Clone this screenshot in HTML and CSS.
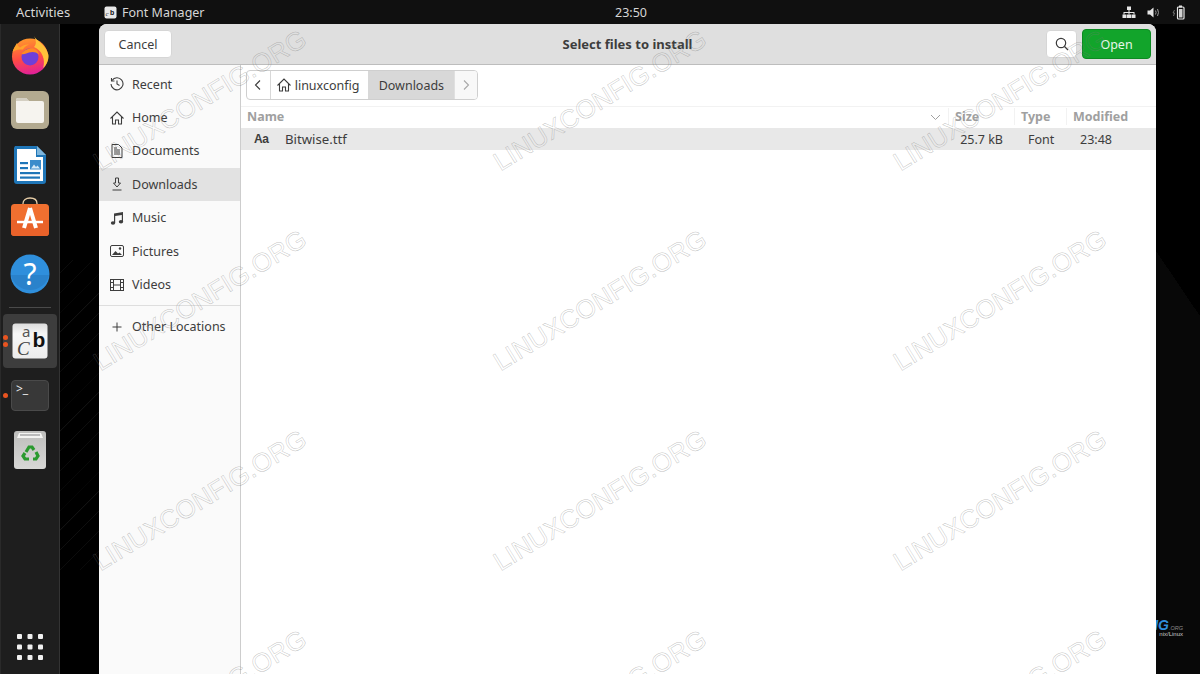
FILE: index.html
```html
<!DOCTYPE html>
<html lang="en">
<head>
  <meta charset="UTF-8">
  <title>Select files to install</title>
  <link rel="stylesheet" href="styles.css">
</head>
<body>

  <header class="topbar">
    <span class="activities">Activities</span>
    <span class="app-menu">
      <svg class="app-icon" width="13" height="13" viewBox="0 0 13 13">
        <rect x="0.5" y="0.5" width="12" height="12" rx="2" fill="#e8e8e8"/>
        <text x="1.5" y="10" font-size="7" font-style="italic" fill="#333" font-family="Liberation Serif, serif">c</text>
        <text x="6" y="9" font-size="7" font-weight="700" fill="#111" font-family="Liberation Sans, sans-serif">b</text>
      </svg>
      Font Manager
    </span>
    <span class="clock">23:50</span>
    <span class="tray">
      <svg width="14" height="13" viewBox="0 0 14 13" fill="#e6e6e6">
        <rect x="5" y="0.5" width="4" height="3.5"/>
        <rect x="0.5" y="8.5" width="4" height="3.5"/>
        <rect x="5" y="8.5" width="4" height="3.5"/>
        <rect x="9.5" y="8.5" width="4" height="3.5"/>
        <path d="M6.5 4h1v2h5v2.500h-1V7H7.500v1.500h-1V7H2.500v1.500h-1V6h5z"/>
      </svg>
      <svg width="14" height="13" viewBox="0 0 14 13">
        <path d="M0.500 4.500h2.500L6.500 1.500v10l-3.500-3H0.500z" fill="#e6e6e6"/>
        <path d="M8.500 4.500q1.200 2 0 4M10.500 3q2 3.500 0 7" fill="none" stroke="#9a9a9a" stroke-width="1"/>
      </svg>
      <svg width="14" height="15" viewBox="0 0 14 15">
        <path d="M2.500 5L1 8h1.500L1.500 11" fill="none" stroke="#888" stroke-width="0.800"/>
        <rect x="7" y="0.500" width="3" height="2" fill="#e6e6e6"/>
        <rect x="5.500" y="2" width="6.500" height="12" rx="1" fill="none" stroke="#e6e6e6" stroke-width="1.200"/>
        <rect x="7" y="4" width="3.500" height="8.500" fill="#d0d0d0"/>
      </svg>
    </span>
  </header>

  <div class="workspace">
    <nav class="dock">
      <svg class="dock-icon firefox" width="40" height="40" viewBox="0 0 40 40">
        <defs>
          <linearGradient id="ff" x1="0.300" y1="0" x2="0.500" y2="1">
            <stop offset="0" stop-color="#ff9a2b"/>
            <stop offset="0.550" stop-color="#ff4a45"/>
            <stop offset="1" stop-color="#e0209a"/>
          </linearGradient>
        </defs>
        <circle cx="20" cy="21.500" r="18" fill="url(#ff)"/>
        <path d="M24 1c2 5 12 8 14.500 19 .5 4-1.500 10-5.500 13 3-8-1-18-9-21 3-3 2-7 0-11z" fill="#ffc23a"/>
        <path d="M2.500 17C3.500 14 5 11 7 8c.5 2 1.500 3.500 3 4.500 3-2.500 6-3.500 9-3-3 1-5 3-6 5-4 0-7 0-10.500 2.500z" fill="#ffa42b"/>
        <circle cx="20" cy="22" r="8.500" fill="#6f3fd8"/>
        <path d="M11.500 19c2-4 8-6.500 12-5.500 3 1 5 3 5.500 6-3-3-7-3-10-2-2 .500-5 2.500-7.500 1.500z" fill="#ff8a24"/>
      </svg>

      <svg class="dock-icon files" width="40" height="40" viewBox="0 0 40 40">
        <rect x="1" y="1" width="38" height="38" rx="6" fill="#b3aa90"/>
        <path d="M6 10a2 2 0 0 1 2-2h8l3 3h13a2 2 0 0 1 2 2v18a2 2 0 0 1-2 2H8a2 2 0 0 1-2-2z" fill="#f6f4ef"/>
        <path d="M6 10a2 2 0 0 1 2-2h8l3 3H6z" fill="#d4cfc2"/>
      </svg>

      <svg class="dock-icon writer" width="40" height="40" viewBox="0 0 40 40">
        <path d="M5 1h22l9 9v26a3 3 0 0 1-3 3H7a3 3 0 0 1-3-3V3z" fill="#1f76b8"/>
        <path d="M7 4h19v8h7v24H7z" fill="#fff"/>
        <path d="M27 1l9 9h-9z" fill="#7fb6dc"/>
        <rect x="10" y="17" width="8" height="2.200" fill="#1f76b8"/>
        <rect x="10" y="22" width="8" height="2.200" fill="#1f76b8"/>
        <rect x="10" y="27" width="20" height="2.200" fill="#1f76b8"/>
        <rect x="10" y="31.500" width="20" height="2.200" fill="#1f76b8"/>
        <rect x="20" y="15" width="11" height="9.500" fill="#3b8ccb"/>
        <path d="M21 23.500l3-4 2 2.500 1.500-1.500 2.500 3z" fill="#d5e9f7"/>
      </svg>

      <svg class="dock-icon store" width="40" height="40" viewBox="0 0 40 40">
        <path d="M13 9V6.500C13 3 16 1 20 1s7 2 7 5.500V9" fill="none" stroke="#e9cfa8" stroke-width="1.300"/>
        <rect x="1" y="7" width="38" height="32" rx="3.500" fill="#f07030"/>
        <path d="M1 23h38v12.500a3.500 3.500 0 0 1-3.500 3.500h-32A3.500 3.500 0 0 1 1 35.500z" fill="#e9622a"/>
        <path d="M20 11l-6 20M20 11l6 20" stroke="#fff" stroke-width="4" fill="none"/>
        <path d="M7 25h26" stroke="#fff" stroke-width="2.500"/>
      </svg>

      <svg class="dock-icon help" width="40" height="40" viewBox="0 0 40 40">
        <circle cx="20" cy="20" r="19.500" fill="#2f8fdc"/>
        <path d="M1 21h38a19.500 19.500 0 0 1-38 0z" fill="#2a82cb"/>
        <text x="20" y="31" text-anchor="middle" font-size="30" fill="#fff" font-family="Noto Sans, sans-serif">?</text>
      </svg>

      <div class="dock-sep"></div>

      <div class="dock-active">
        <span class="dot dot-a"></span>
        <span class="dot dot-b"></span>
        <svg width="36" height="36" viewBox="0 0 36 36">
          <defs>
            <linearGradient id="card" x1="0" y1="0" x2="0" y2="1">
              <stop offset="0" stop-color="#dcdcdc"/>
              <stop offset="0.300" stop-color="#f6f6f6"/>
              <stop offset="1" stop-color="#ececec"/>
            </linearGradient>
          </defs>
          <rect x="0.500" y="0.500" width="35" height="35" rx="3" fill="url(#card)"/>
          <text x="10" y="14" font-size="15" fill="#555" font-family="Noto Sans, sans-serif">a</text>
          <text x="20.500" y="24" font-size="21" font-weight="700" fill="#111" font-family="Liberation Sans, sans-serif">b</text>
          <text x="5" y="32" font-size="19" font-style="italic" fill="#444" font-family="Liberation Serif, serif">C</text>
        </svg>
      </div>

      <div class="dock-terminal">
        <span class="dot dot-c"></span>
        <div class="terminal-icon">&gt;_</div>
      </div>

      <svg class="dock-icon trash" width="34" height="40" viewBox="0 0 34 40">
        <defs>
          <linearGradient id="bin" x1="0" y1="0" x2="0" y2="1">
            <stop offset="0" stop-color="#bdbdbb"/>
            <stop offset="1" stop-color="#d8d8d6"/>
          </linearGradient>
        </defs>
        <rect x="1" y="1" width="32" height="38" rx="3" fill="url(#bin)"/>
        <path d="M4 8l2-5h22l2 5z" fill="#f4f4f2"/>
        <rect x="7" y="4" width="20" height="2" fill="#bbb"/>
        <g fill="none" stroke="#2b9a2f" stroke-width="3.200">
          <path d="M13 22l3-5h3l2 3"/>
          <path d="M23 22l2 4-2 3h-3"/>
          <path d="M16 29h-4l-2-3 2-3"/>
        </g>
      </svg>

      <svg class="dock-grid" width="28" height="28" viewBox="0 0 28 28" fill="#f2f2f2">
        <rect x="1" y="1" width="5" height="5" rx="1"/><rect x="11.500" y="1" width="5" height="5" rx="1"/><rect x="22" y="1" width="5" height="5" rx="1"/>
        <rect x="1" y="11.500" width="5" height="5" rx="1"/><rect x="11.500" y="11.500" width="5" height="5" rx="1"/><rect x="22" y="11.500" width="5" height="5" rx="1"/>
        <rect x="1" y="22" width="5" height="5" rx="1"/><rect x="11.500" y="22" width="5" height="5" rx="1"/><rect x="22" y="22" width="5" height="5" rx="1"/>
      </svg>
    </nav>

    <div class="desktop">
      <div class="corner-logo"><b>IG</b><i>.ORG</i><small>nix/Linux</small></div>

      <section class="dialog">
        <div class="dialog-head">
          <button class="btn btn-cancel">Cancel</button>
          <span class="dialog-title">Select files to install</span>
          <button class="btn btn-icon">
            <svg width="14" height="14" viewBox="0 0 14 14" fill="none" stroke="#3d3d3d" stroke-width="1.200">
              <circle cx="6" cy="6" r="4.700"/>
              <path d="M9.500 9.500l3.500 3.500"/>
            </svg>
          </button>
          <button class="btn btn-open">Open</button>
        </div>

        <div class="dialog-body">
          <aside class="sidebar">
            <div class="place">
              <svg width="14" height="14" viewBox="0 0 14 14" fill="none" stroke="#3d3d3d" stroke-width="1.100">
                <path d="M2 3.500A6 6 0 1 1 1 7"/><path d="M1.500 1v3h3"/><path d="M7 3.500V7l2.500 1.500"/>
              </svg>
              Recent
            </div>
            <div class="place">
              <svg width="14" height="14" viewBox="0 0 14 14" fill="none" stroke="#3d3d3d" stroke-width="1.100">
                <path d="M0.500 7.500L7 1l6.500 6.500"/><path d="M2.500 6v7h3V9h3v4h3V6"/>
              </svg>
              Home
            </div>
            <div class="place">
              <svg width="14" height="14" viewBox="0 0 14 14" fill="none" stroke="#3d3d3d" stroke-width="1">
                <path d="M2 .500h6.500L12 4v9.500H2z"/><path d="M4 6h6M4 8h6M4 10h6M4 4h3"/>
              </svg>
              Documents
            </div>
            <div class="place place-on">
              <svg width="14" height="14" viewBox="0 0 14 14" fill="none" stroke="#3d3d3d" stroke-width="1">
                <path d="M5.500 1h3v5h2L7 10 3.500 6h2z"/><path d="M2.500 13h9"/>
              </svg>
              Downloads
            </div>
            <div class="place">
              <svg width="14" height="14" viewBox="0 0 14 14" fill="#3d3d3d">
                <path d="M4 2.500L13 1v9.500h-1.200V4L5.200 5.100V12H4z"/>
                <ellipse cx="3" cy="12" rx="2.200" ry="1.700"/><ellipse cx="11" cy="10.700" rx="2.200" ry="1.700"/>
              </svg>
              Music
            </div>
            <div class="place">
              <svg width="14" height="14" viewBox="0 0 14 14">
                <rect x="0.500" y="1.500" width="13" height="11" rx="1.500" fill="none" stroke="#3d3d3d"/>
                <path d="M2 11l3.500-4 2.500 2.500 1.500-1 2.500 2.500z" fill="#3d3d3d"/>
                <circle cx="10" cy="4.500" r="1.200" fill="#3d3d3d"/>
              </svg>
              Pictures
            </div>
            <div class="place">
              <svg width="14" height="14" viewBox="0 0 14 14" fill="none" stroke="#3d3d3d">
                <rect x="0.500" y="1.500" width="13" height="11"/>
                <path d="M3.500 1.500v11M10.500 1.500v11M3.500 7h7M.5 4.500h3M.5 9.500h3M10.500 4.500h3M10.500 9.500h3"/>
              </svg>
              Videos
            </div>
            <div class="place-sep"></div>
            <div class="place place-other">
              <svg width="14" height="14" viewBox="0 0 14 14" fill="none" stroke="#3d3d3d" stroke-width="1">
                <path d="M7 2.500v9M2.500 7h9"/>
              </svg>
              Other Locations
            </div>
          </aside>

          <main class="browser">
            <div class="pathbar">
              <span class="crumb crumb-nav">
                <svg width="8" height="12" viewBox="0 0 8 12" fill="none" stroke="#3d3d3d" stroke-width="1.100"><path d="M6 1.500L1.500 6 6 10.500"/></svg>
              </span>
              <span class="crumb crumb-home">
                <svg width="14" height="14" viewBox="0 0 14 14" fill="none" stroke="#3d3d3d" stroke-width="1.100">
                  <path d="M0.500 7.500L7 1l6.500 6.500"/><path d="M2.500 6v7h3V9h3v4h3V6"/>
                </svg>
                linuxconfig
              </span>
              <span class="crumb crumb-on">Downloads</span>
              <span class="crumb crumb-nav crumb-off">
                <svg width="8" height="12" viewBox="0 0 8 12" fill="none" stroke="#a8a8a8" stroke-width="1.100"><path d="M2 1.500L6.500 6 2 10.500"/></svg>
              </span>
            </div>

            <div class="file-row file-head">
              <span class="col-name">Name</span>
              <svg class="sort-caret" width="11" height="7" viewBox="0 0 11 7" fill="none" stroke="#a0a0a0"><path d="M1 1l4.500 4.500L10 1"/></svg>
              <span class="col-size">Size</span>
              <span class="col-type">Type</span>
              <span class="col-date">Modified</span>
            </div>
            <div class="file-row file-on">
              <span class="col-name">
                <span class="font-glyph">Aa</span>
                <span class="file-name">Bitwise.ttf</span>
              </span>
              <span class="col-size">25.7 kB</span>
              <span class="col-type">Font</span>
              <span class="col-date">23:48</span>
            </div>
          </main>
        </div>
      </section>
    </div>
  </div>

  <!-- watermark over the whole shot -->
  <div class="watermark">
    <span>LINUXCONFIG.ORG</span><span>LINUXCONFIG.ORG</span><span>LINUXCONFIG.ORG</span>
    <span>LINUXCONFIG.ORG</span><span>LINUXCONFIG.ORG</span><span>LINUXCONFIG.ORG</span>
    <span>LINUXCONFIG.ORG</span><span>LINUXCONFIG.ORG</span><span>LINUXCONFIG.ORG</span>
    <span>LINUXCONFIG.ORG</span><span>LINUXCONFIG.ORG</span><span>LINUXCONFIG.ORG</span>
  </div>

</body>
</html>
```

FILE: styles.css
```css
html, body {
  height: 100%;
}
body {
  margin: 0;
  position: relative;
  display: flex;
  flex-direction: column;
  overflow: hidden;
  background-color: #000;
  font-family: "Noto Sans", sans-serif;
  font-size: 12.500px;
  color: #3d3d3d;
}

/* top bar */
.topbar {
  height: 24px;
  flex: none;
  display: flex;
  align-items: center;
  position: relative;
  background-color: #101010;
  color: #d6d6d6;
  padding-left: 16px;
}
.activities {
  width: 88px;
  font-size: 13px;
}
.app-menu {
  display: flex;
  align-items: center;
  gap: 5px;
}
.clock {
  position: absolute;
  left: 615px;
}
.tray {
  margin-left: auto;
  display: flex;
  align-items: center;
  gap: 11px;
  padding-right: 14px;
}

/* left dock */
.workspace {
  flex: 1;
  display: flex;
  min-height: 0;
}
.dock {
  flex: none;
  display: flex;
  flex-direction: column;
  align-items: center;
  background-color: #1e1e1e;
  border-right: 1px solid #333;
  border-left: 1px solid #2a2a2a;
  box-sizing: border-box;
  width: 60px;
  padding-top: 11px;
}
.dock-icon {
  flex: none;
  margin-bottom: 15px;
}
.dock .writer {
  margin-bottom: 12px;
}
.dock .store {
  margin-bottom: 17px;
}
.dock .help {
  margin-bottom: 13px;
}
.dock-sep {
  width: 42px;
  height: 1px;
  flex: none;
  background-color: #4a4a4a;
}
.dock-active {
  position: relative;
  width: 54px;
  height: 54px;
  flex: none;
  margin-top: 6px;
  display: flex;
  align-items: center;
  justify-content: center;
  background-color: #3d3d3d;
  border-radius: 4px;
}
.dot {
  position: absolute;
  left: 0;
  width: 5px;
  height: 5px;
  border-radius: 50%;
  background-color: #e95420;
}
.dot-a { top: 21px; }
.dot-b { top: 28px; }
.dot-c { top: 13px; left: 2px; }
.dock-terminal {
  position: relative;
  width: 58px;
  height: 32px;
  flex: none;
  margin-top: 12px;
  margin-bottom: 18px;
  display: flex;
  justify-content: center;
}
.terminal-icon {
  width: 38px;
  height: 31px;
  box-sizing: border-box;
  padding: 1px 4px;
  border: 1px solid #4a4a4a;
  border-radius: 4px;
  background-color: #383838;
  color: #eee;
  font-size: 12px;
  line-height: 14px;
}
.dock-grid {
  margin-top: auto;
  margin-bottom: 13px;
}

/* desktop + dialog */
.desktop {
  flex: 1;
  position: relative;
  padding-left: 39px;
  background-image:
    repeating-linear-gradient(-45deg, #000 0, #000 13px, #141414 14px),
    linear-gradient(236deg, #000 37px, #080808 37px);
  background-size: 39px 310px, 44px 424px;
  background-position: 0 236px, 100% 100%;
  background-repeat: no-repeat;
}
.dialog {
  position: relative;
  width: 1057px;
  height: 100%;
  display: flex;
  flex-direction: column;
  background-color: #fff;
  border-radius: 8px 8px 0 0;
  overflow: hidden;
}
.dialog-head {
  height: 41px;
  flex: none;
  display: flex;
  align-items: center;
  gap: 5px;
  position: relative;
  padding: 0 5px;
  box-sizing: border-box;
  background-color: #dfdfdf;
  border-bottom: 1px solid #bdbdbd;
}
.dialog-title {
  position: absolute;
  left: 0;
  right: 0;
  text-align: center;
  font-weight: 700;
  font-size: 13px;
  pointer-events: none;
}
.btn {
  height: 28px;
  box-sizing: border-box;
  padding: 0;
  font: inherit;
  color: #3d3d3d;
  background-color: #fff;
  border: 1px solid #d6d6d6;
  border-radius: 4px;
}
.btn-cancel {
  width: 68px;
}
.btn-icon {
  width: 31px;
  margin-left: auto;
  display: flex;
  align-items: center;
  justify-content: center;
}
.btn-open {
  width: 69px;
  height: 30px;
  color: #e6f6e8;
  background-color: #12a42b;
  border-color: #0d8a22;
}
.dialog-body {
  flex: 1;
  display: flex;
  min-height: 0;
}

/* places sidebar */
.sidebar {
  width: 142px;
  flex: none;
  box-sizing: border-box;
  padding-top: 3px;
  background-color: #fafafa;
  border-right: 1px solid #cdcdcd;
}
.place {
  height: 32.400px;
  margin-bottom: 1px;
  display: flex;
  align-items: center;
  gap: 8px;
  padding-left: 11px;
}
.place-on {
  background-color: #e2e2e2;
}
.place-sep {
  height: 1px;
  margin-top: 4px;
  background-color: #dedede;
}
.place-other {
  margin-top: 5px;
}

/* file list */
.browser {
  flex: 1;
  min-width: 0;
}
.pathbar {
  display: flex;
  height: 30px;
  box-sizing: border-box;
  margin: 5px 0 6px 5px;
  width: 232px;
  border: 1px solid #cfcfcf;
  border-radius: 4px;
  overflow: hidden;
  background-color: #fff;
}
.crumb {
  display: flex;
  align-items: center;
  justify-content: center;
}
.crumb-nav {
  width: 23px;
  border-right: 1px solid #d8d8d8;
}
.crumb-off {
  width: 22px;
  border-right: 0;
  border-left: 1px solid #e0e0e0;
  background-color: #f8f8f8;
}
.crumb-home {
  width: 99px;
  box-sizing: border-box;
  padding-left: 6px;
  justify-content: flex-start;
  gap: 4px;
}
.crumb-on {
  width: 87px;
  background-color: #d8d8d8;
}
.file-row {
  position: relative;
  height: 22px;
  box-sizing: border-box;
  display: flex;
  align-items: center;
  padding: 0 0 2px 6px;
}
.file-head {
  color: #a0a0a0;
  font-weight: 700;
  border-top: 1px solid #f2f2f2;
}
.file-on {
  padding-bottom: 0;
  background-color: #e8e8e8;
}
.col-name {
  flex: 1;
  display: flex;
  align-items: center;
}
.file-name {
  font-size: 13.200px;
}
.font-glyph {
  width: 38px;
  padding-left: 7px;
  box-sizing: border-box;
  font-family: "Liberation Sans", sans-serif;
  font-size: 12px;
  font-weight: 700;
  letter-spacing: -0.500px;
}
.sort-caret {
  position: absolute;
  left: 689px;
  top: 7px;
}
.col-size {
  width: 57px;
  text-align: right;
  margin-right: 18px;
}
.file-head .col-size {
  width: 66px;
  margin-right: 0;
  padding-left: 6px;
  box-sizing: border-box;
  text-align: left;
  border-left: 1px solid #f2f2f2;
}
.col-type {
  width: 52px;
}
.file-head .col-type {
  padding-left: 6px;
  box-sizing: border-box;
  border-left: 1px solid #f2f2f2;
}
.file-on .col-type {
  padding-left: 7px;
  width: 45px;
}
.col-date {
  width: 83px;
}
.file-head .col-date {
  width: 90px;
  padding-left: 6px;
  box-sizing: border-box;
  border-left: 1px solid #f2f2f2;
}
.file-on .col-date {
  padding-left: 7px;
  width: 76px;
}

/* logo peeking out behind the dialog */
.corner-logo {
  position: absolute;
  right: 17px;
  top: 593px;
  text-align: right;
  color: #2f8fdc;
  font-family: "Liberation Sans", sans-serif;
  white-space: nowrap;
}
.corner-logo b {
  font-style: italic;
  font-size: 14px;
}
.corner-logo i {
  font-size: 5.500px;
  color: #888;
}
.corner-logo small {
  display: block;
  margin-top: -2px;
  font-size: 6px;
  color: #ccc;
}

/* watermark */
.watermark {
  position: absolute;
  left: 0;
  top: 0;
  width: 1200px;
  height: 674px;
  overflow: hidden;
  display: grid;
  grid-template-columns: repeat(3, 400px);
  grid-auto-rows: 200px;
  place-items: center;
  pointer-events: none;
}
.watermark span {
  white-space: nowrap;
  font-family: "Liberation Sans", sans-serif;
  font-size: 26px;
  color: transparent;
  -webkit-text-stroke: 0.500px rgba(120, 120, 120, 0.45);
  transform: rotate(-31.500deg);
}
```
